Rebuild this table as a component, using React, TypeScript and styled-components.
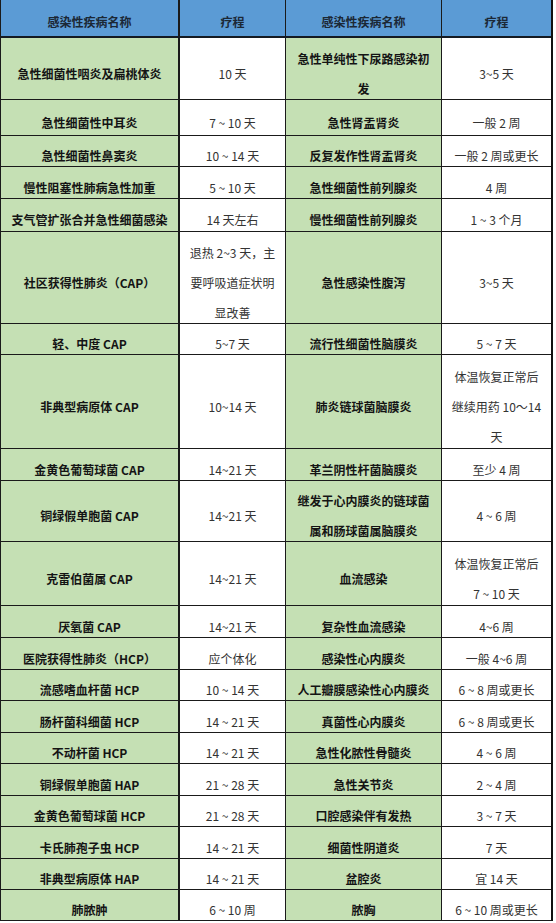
import React from "react";
import styled, { createGlobalStyle } from "styled-components";

type Text = string | string[];

type Course = {
  h: number;
  name1: Text;
  term1: Text;
  name2: Text;
  term2: Text;
};

const courses: Course[] = [
  { h: 62, name1: "急性细菌性咽炎及扁桃体炎", term1: "10 天", name2: ["急性单纯性下尿路感染初", "发"], term2: "3~5 天" },
  { h: 36, name1: "急性细菌性中耳炎", term1: "7 ~ 10 天", name2: "急性肾盂肾炎", term2: "一般 2 周" },
  { h: 31, name1: "急性细菌性鼻窦炎", term1: "10 ~ 14 天", name2: "反复发作性肾盂肾炎", term2: "一般 2 周或更长" },
  { h: 32, name1: "慢性阻塞性肺病急性加重", term1: "5 ~ 10 天", name2: "急性细菌性前列腺炎", term2: "4 周" },
  { h: 33, name1: "支气管扩张合并急性细菌感染", term1: "14 天左右", name2: "慢性细菌性前列腺炎", term2: "1 ~ 3 个月" },
  {
    h: 92,
    name1: "社区获得性肺炎（CAP）",
    term1: ["退热 2~3 天，主", "要呼吸道症状明", "显改善"],
    name2: "急性感染性腹泻",
    term2: "3~5 天",
  },
  { h: 31, name1: "轻、中度 CAP", term1: "5~7 天", name2: "流行性细菌性脑膜炎", term2: "5 ~ 7 天" },
  {
    h: 94,
    name1: "非典型病原体 CAP",
    term1: "10~14 天",
    name2: "肺炎链球菌脑膜炎",
    term2: ["体温恢复正常后", "继续用药 10～14", "天"],
  },
  { h: 32, name1: "金黄色葡萄球菌 CAP", term1: "14~21 天", name2: "革兰阴性杆菌脑膜炎", term2: "至少 4 周" },
  {
    h: 61,
    name1: "铜绿假单胞菌 CAP",
    term1: "14~21 天",
    name2: ["继发于心内膜炎的链球菌", "属和肠球菌属脑膜炎"],
    term2: "4 ~ 6 周",
  },
  { h: 64, name1: "克雷伯菌属 CAP", term1: "14~21 天", name2: "血流感染", term2: ["体温恢复正常后", "7 ~ 10 天"] },
  { h: 32, name1: "厌氧菌 CAP", term1: "14~21 天", name2: "复杂性血流感染", term2: "4~6 周" },
  { h: 32, name1: "医院获得性肺炎（HCP）", term1: "应个体化", name2: "感染性心内膜炎", term2: "一般 4~6 周" },
  { h: 31, name1: "流感嗜血杆菌 HCP", term1: "10 ~ 14 天", name2: "人工瓣膜感染性心内膜炎", term2: "6 ~ 8 周或更长" },
  { h: 32, name1: "肠杆菌科细菌 HCP", term1: "14 ~ 21 天", name2: "真菌性心内膜炎", term2: "6 ~ 8 周或更长" },
  { h: 31, name1: "不动杆菌 HCP", term1: "14 ~ 21 天", name2: "急性化脓性骨髓炎", term2: "4 ~ 6 周" },
  { h: 32, name1: "铜绿假单胞菌 HAP", term1: "21 ~ 28 天", name2: "急性关节炎", term2: "2 ~ 4 周" },
  { h: 31, name1: "金黄色葡萄球菌 HCP", term1: "21 ~ 28 天", name2: "口腔感染伴有发热", term2: "3 ~ 7 天" },
  { h: 32, name1: "卡氏肺孢子虫 HCP", term1: "14 ~ 21 天", name2: "细菌性阴道炎", term2: "7 天" },
  { h: 31, name1: "非典型病原体 HAP", term1: "14 ~ 21 天", name2: "盆腔炎", term2: "宜 14 天" },
  { h: 31, name1: "肺脓肿", term1: "6 ~ 10 周", name2: "脓胸", term2: "6 ~ 10 周或更长" },
];

// right border width of each column, the last one comes from the table
const edges = [2, 1, 1, 0];

function Lines({ text }: { text: Text }) {
  const list = Array.isArray(text) ? text : [text];
  return (
    <>
      {list.map((line, i) => (
        <Line key={i}>{line}</Line>
      ))}
    </>
  );
}

export default function App() {
  return (
    <>
      <GlobalStyle />
      <Table>
        <HeaderRow>
          <HeaderCell $edge={edges[0]}>感染性疾病名称</HeaderCell>
          <HeaderCell $edge={edges[1]}>疗程</HeaderCell>
          <HeaderCell $edge={edges[2]}>感染性疾病名称</HeaderCell>
          <HeaderCell $edge={edges[3]}>疗程</HeaderCell>
        </HeaderRow>
        {courses.map((c, i) => (
          <Row key={i} $h={c.h}>
            <NameCell $edge={edges[0]}>
              <Lines text={c.name1} />
            </NameCell>
            <TermCell $edge={edges[1]}>
              <Lines text={c.term1} />
            </TermCell>
            <NameCell $edge={edges[2]}>
              <Lines text={c.name2} />
            </NameCell>
            <TermCell $edge={edges[3]}>
              <Lines text={c.term2} />
            </TermCell>
          </Row>
        ))}
      </Table>
    </>
  );
}

const GlobalStyle = createGlobalStyle`
  * {
    box-sizing: border-box;
  }
  body, html, #root {
    margin: 0;
    padding: 0;
    background: #ffffff;
    font-family: "Noto Sans CJK SC", "Noto Sans", sans-serif;
  }
`;

const Table = styled.div`
  width: 553px;
  border-left: 1px solid #1a1a1a;
  border-right: 2px solid #111111;
`;

const HeaderRow = styled.div`
  display: grid;
  grid-template-columns: 179px 106px 156px 109px;
  grid-template-rows: minmax(0, 1fr);
  height: 38px;
  background-color: #5b9bd5;
  border-bottom: 2px solid #141a22;
`;

const Row = styled.div<{ $h: number }>`
  display: grid;
  grid-template-columns: 179px 106px 156px 109px;
  grid-template-rows: minmax(0, 1fr);
  height: ${({ $h }) => $h}px;
  border-bottom: 1px solid #1a1a1a;
`;

const HeaderCell = styled.div<{ $edge: number }>`
  display: flex;
  align-items: center;
  justify-content: center;
  padding-top: 6px;
  border-right: ${({ $edge }) => $edge}px solid #1a1a1a;
  font-size: 12px;
  font-weight: 700;
  color: #1b2835;
  white-space: nowrap;
`;

const Cell = styled.div<{ $edge: number }>`
  display: flex;
  flex-direction: column;
  align-items: center;
  justify-content: center;
  min-height: 0;
  padding: 10px 6px 0;
  border-right: ${({ $edge }) => $edge}px solid #1a1a1a;
  font-size: 12px;
  line-height: 30px;
  text-align: center;
  white-space: nowrap;
`;

const NameCell = styled(Cell)`
  background-color: #c5e0b4;
  font-weight: 700;
  color: #141414;
`;

const TermCell = styled(Cell)`
  background-color: #ffffff;
  font-weight: 400;
  color: #333333;
`;

const Line = styled.span`
  display: block;
`;
